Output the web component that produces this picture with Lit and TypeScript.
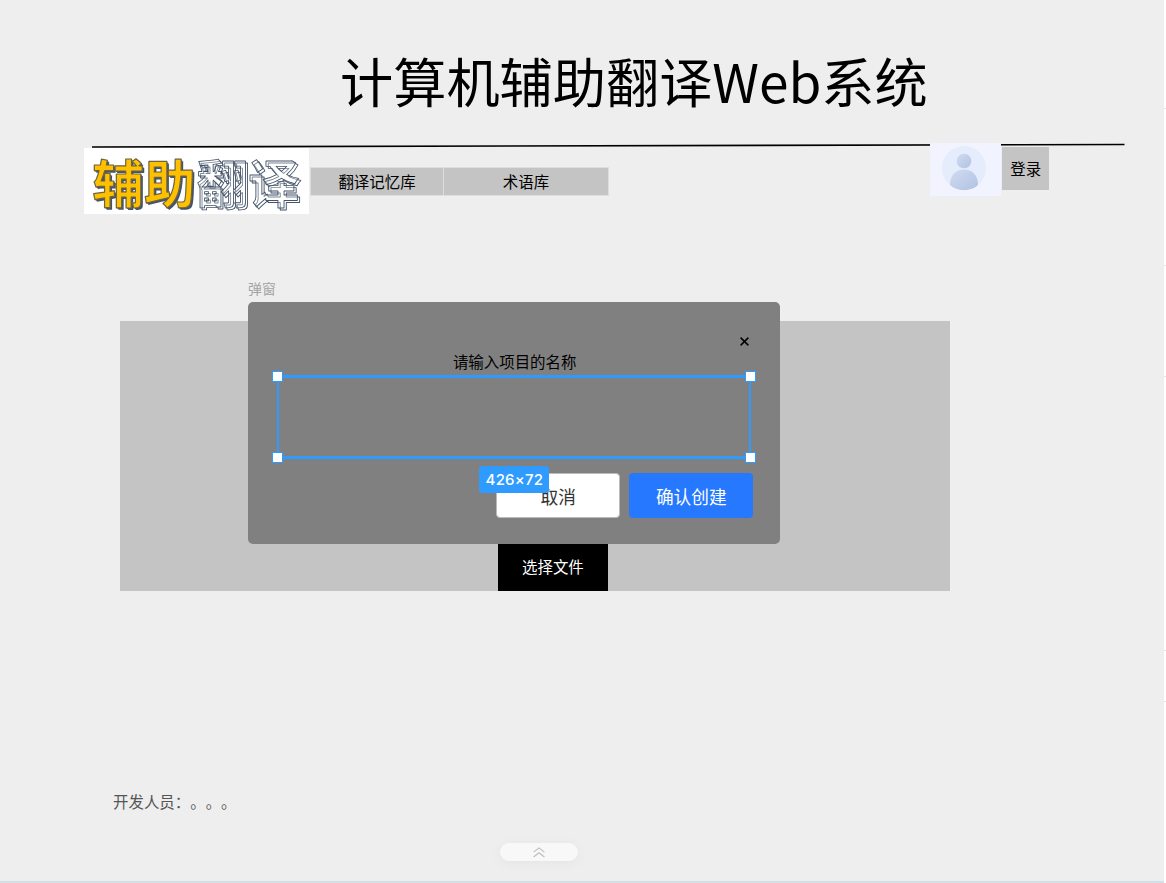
import { LitElement, html, css } from "lit";
import { customElement } from "lit/decorators.js";

@customElement("project-dialog")
class ProjectDialog extends LitElement {
  static styles = css`
    :host { display: block; width: 532px; }
    .label { height: 27px; line-height: 26px; font-size: 13.9px; color: #a3a3a3; white-space: nowrap; }
    .dialog { box-sizing: border-box; height: 241.5px; background: #808080; border-radius: 5px; padding: 32px 26.7px 0 29px; display: flex; flex-direction: column; }
    .top { display: flex; justify-content: flex-end; height: 15px; padding-right: 4.3px; align-items: center; }
    .title { text-align: center; font-size: 15.45px; line-height: 24px; height: 26px; color: #000; padding-right: 1px; }
    .selection { position: relative; box-sizing: border-box; width: 474px; height: 84px; border: solid #2f9bff; border-width: 3px 2px 3px 2px; }
    .handle { position: absolute; box-sizing: border-box; width: 11px; height: 11px; background: #fff; border: 1px solid #2f9bff; }
    .tl { left: -7px; top: -7px; }
    .tr { right: -7px; top: -7px; }
    .bl { left: -7px; bottom: -7px; }
    .br { right: -7px; bottom: -7px; }
    .size { position: absolute; left: 200.4px; top: 88px; width: 70px; height: 27px; border-radius: 3px; background: #2f9bff; color: #fff; font: 500 15px/27px Inter, sans-serif; letter-spacing: .2px; text-align: center; z-index: 1; }
    .actions { display: flex; justify-content: flex-end; gap: 9px; margin-top: 14px; }
    .btn { box-sizing: border-box; width: 124px; height: 44.5px; border-radius: 4px; font-size: 17.7px; line-height: 46px; text-align: center; }
    .cancel { background: #fff; color: #333; border: 1px solid #bbb; line-height: 44px; }
    .ok { background: #2678ff; color: #fff; }
  `;
  render() {
    return html`
      <div class="label">弹窗</div>
      <div class="dialog">
        <div class="top">
          <svg width="9" height="9" viewBox="0 0 9 9"><path d="M.6.6 8.4 8.4M8.4.6.6 8.4" stroke="#000" stroke-width="1.5" /></svg>
        </div>
        <div class="title">请输入项目的名称</div>
        <div class="selection">
          <i class="handle tl"></i><i class="handle tr"></i><i class="handle bl"></i><i class="handle br"></i>
          <div class="size">426×72</div>
        </div>
        <div class="actions">
          <div class="btn cancel">取消</div>
          <div class="btn ok">确认创建</div>
        </div>
      </div>`;
  }
}

@customElement("app-root")
class AppRoot extends LitElement {
  static styles = css`
    :host { display: block; width: 1166px; height: 883px; overflow: hidden; position: relative; font-family: "Noto Sans CJK SC", sans-serif; color: #000; }
    .page { display: flex; height: 883px; background: #fff; }
    .canvas { position: relative; box-sizing: border-box; width: 1164px; height: 883px; background: #eee; border-bottom: 2px solid #d3e0e6; display: flex; flex-direction: column; }
    .heading { margin: 0; height: 143px; padding-left: 340px; font-size: 53.2px; font-weight: 400; line-height: 160px; white-space: nowrap; box-sizing: border-box; }
    .rule { position: absolute; left: 0; top: 140px; }
    .bar { position: relative; height: 71px; display: flex; align-items: flex-start; padding-left: 84px; }
    .logo { width: 225px; height: 66px; margin-top: 5px; background: #fff; overflow: visible; }
    .logo text { font-family: "Noto Sans CJK SC", sans-serif; font-weight: 700; font-size: 51.6px; }
    .tabs { display: flex; gap: 1px; margin: 24px 0 0 1px; border: 1px solid #dedede; background: #dedede; }
    .tab { height: 27px; background: #c4c4c4; font-size: 15.45px; line-height: 26px; text-align: center; }
    .memory { width: 132px; }
    .terms { width: 164px; }
    .account { display: flex; gap: 1px; margin-left: 321px; }
    .avatar { width: 71px; height: 53px; background: #f1f3ff; }
    .login { width: 47.4px; height: 43px; margin-top: 4px; background: #c4c4c4; font-size: 15.45px; line-height: 42px; text-align: center; }
    .panel { box-sizing: border-box; width: 830px; height: 270px; margin: 107px 0 0 120px; background: #c4c4c4; display: flex; align-items: flex-end; padding-left: 377.6px; }
    .choose { width: 110.6px; height: 48px; background: #000; color: #fff; font-size: 15.45px; line-height: 46px; text-align: center; }
    .overlay { position: absolute; left: 248px; top: 275px; }
    .dev { margin: 198px 0 0 113px; height: 25px; font-size: 15.45px; line-height: 24px; color: #555; text-spacing-trim: space-all; font-kerning: none; }
    .expand { width: 78px; height: 18px; margin: 29px 0 0 500px; border-radius: 9px; background: #f8f8f8; box-shadow: 0 2px 14px rgba(0,0,0,.045); display: flex; align-items: center; justify-content: center; }
    .side { width: 2px; display: flex; flex-direction: column; }
    .side i { box-sizing: border-box; border-bottom: 1px solid #e4e4e4; }
    .s1 { height: 109px; } .s2 { height: 157px; } .s3 { height: 111px; } .s4 { height: 274px; } .s5 { height: 51px; }
  `;
  render() {
    return html`
      <div class="page">
        <main class="canvas">
          <h1 class="heading">计算机辅助翻译Web系统</h1>
          <svg class="rule" width="1164" height="10"><path d="M92 7 1124.5 4.5" stroke="#000" stroke-width="1.6" /></svg>
          <header class="bar">
            <svg class="logo" viewBox="0 0 225 66">
              <g stroke-linejoin="round">
                <text x="10.4" y="56.8" fill="#44546a">辅助</text>
                <text x="9.4" y="55.8" fill="#44546a">辅助</text>
                <text x="8.4" y="54.8" fill="#ffc000" stroke="#6d6542" stroke-width="1.2">辅助</text>
                <text x="114.6" y="56.6" fill="#fff" stroke="#44546a" stroke-width=".9">翻译</text>
                <text x="112.4" y="54.6" fill="#fff" fill-opacity=".3" stroke="#44546a" stroke-width=".9">翻译</text>
              </g>
            </svg>
            <nav class="tabs"><div class="tab memory">翻译记忆库</div><div class="tab terms">术语库</div></nav>
            <div class="account">
              <svg class="avatar" viewBox="0 0 71 53">
                <defs>
                  <linearGradient id="g" x1="0" y1="0" x2="1" y2="1"><stop offset="0" stop-color="#d0dcf0" /><stop offset="1" stop-color="#b0c1e2" /></linearGradient>
                  <clipPath id="c"><circle cx="34" cy="25" r="22.2" /></clipPath>
                </defs>
                <circle cx="34" cy="25" r="22" fill="#e5ecfc" />
                <circle cx="34" cy="18" r="7.3" fill="url(#g)" />
                <path clip-path="url(#c)" d="M20 42C20 32 26 26.5 34 26.5s14 5.500 14 15.500c-3 4-8 5.5-14 5.5S23 46 20 42Z" fill="url(#g)" />
              </svg>
              <div class="login">登录</div>
            </div>
          </header>
          <section class="panel"><div class="choose">选择文件</div></section>
          <project-dialog class="overlay"></project-dialog>
          <footer class="dev">开发人员：。。。</footer>
          <div class="expand">
            <svg width="12" height="11" viewBox="0 0 12 11" fill="none" stroke="#bdbdbd" stroke-width="1.2"><path d="M.6 5.1 6 .9l5.4 4.2M.6 10 6 5.8l5.4 4.2" /></svg>
          </div>
        </main>
        <aside class="side"><i class="s1"></i><i class="s2"></i><i class="s3"></i><i class="s4"></i><i class="s5"></i></aside>
      </div>`;
  }
}
